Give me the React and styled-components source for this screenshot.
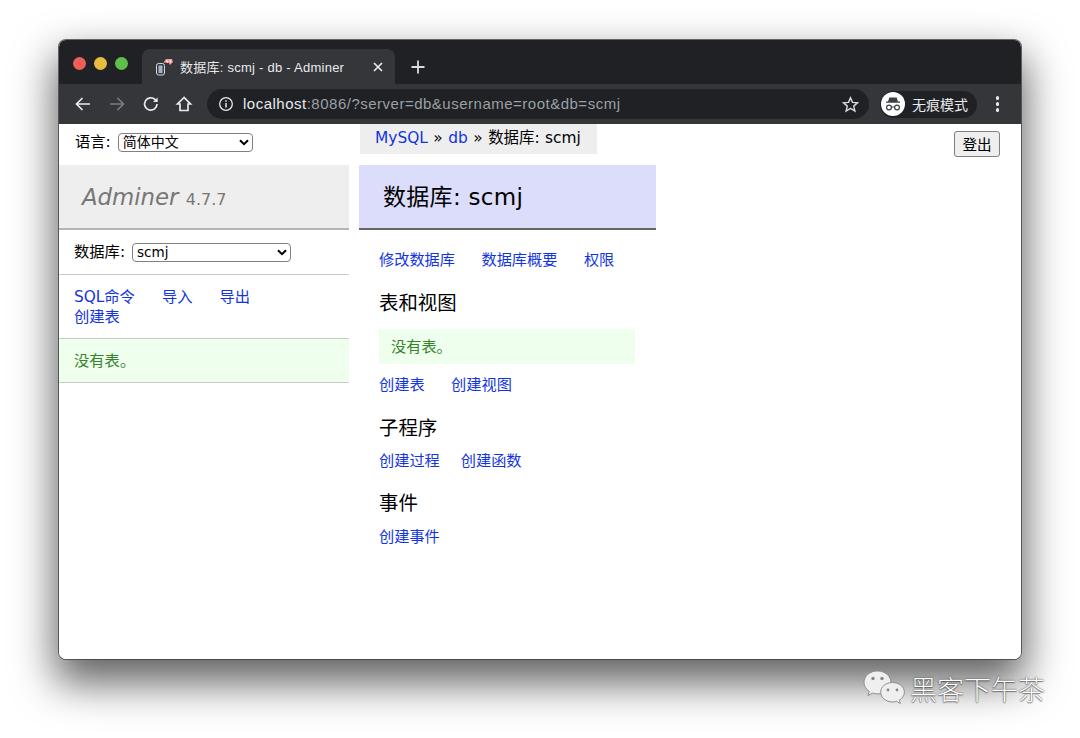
import React from "react";
import styled, { createGlobalStyle } from "styled-components";

const SANS = `"DejaVu Sans", "Noto Sans CJK SC", sans-serif`;
const UI = `"Liberation Sans", "Noto Sans CJK SC", sans-serif`;
const CHEVRON = `url("data:image/svg+xml,%3Csvg xmlns='http://www.w3.org/2000/svg' width='10' height='7'%3E%3Cpath d='M1 1.2l4 4 4-4' fill='none' stroke='%23000' stroke-width='2'/%3E%3C/svg%3E")`;
const BLUE = "#1234e2";
const GREEN = "#35842a";

const Global = createGlobalStyle`
  html, body { margin: 0; padding: 0; background: #fff; }
  body { width: 1080px; height: 738px; overflow: hidden; font-family: ${SANS}; }
  * { box-sizing: border-box; }
`;

const Page = styled.div`
  position: relative;
  width: 1080px;
  height: 738px;
  padding: 40px 59px 79px;
  background: #fff;
`;

const Win = styled.div`
  height: 619px;
  display: flex;
  flex-direction: column;
  border-radius: 7px;
  overflow: hidden;
  background: #fff;
  box-shadow: 0 0 0 1px rgba(60,60,60,.75), 0 20px 42px 4px rgba(0,0,0,.62);
`;

const TabBar = styled.div`
  height: 44px;
  flex: none;
  background: #202124;
  display: flex;
  align-items: flex-end;
  padding-left: 14px;
`;

const Lights = styled.div`
  display: flex;
  gap: 8px;
  align-self: flex-start;
  margin-top: 17px;
  width: 69px;
`;

const Light = styled.span`
  width: 13px;
  height: 13px;
  border-radius: 50%;
  background: ${p => p.$c};
`;

const Tab = styled.div`
  width: 253px;
  height: 35px;
  background: #35363a;
  border-radius: 8px 8px 0 0;
  display: flex;
  align-items: center;
  padding: 0 11px 0 13px;
  color: #e8eaed;
  font: 13px ${UI};
`;

const TabTitle = styled.span`
  flex: 1;
  margin-left: 7px;
  letter-spacing: .25px;
`;

const NewTab = styled.div`
  width: 46px;
  height: 35px;
  display: flex;
  align-items: center;
  justify-content: center;
  color: #dadce0;
`;

const ToolBar = styled.div`
  height: 40px;
  flex: none;
  background: #35363a;
  display: flex;
  align-items: center;
  padding: 0 0 0 15px;
  gap: 0;
`;

const NavIcon = styled.svg`
  flex: none;
  width: 18px;
  height: 18px;
  margin-right: ${p => p.$mr}px;
  fill: none;
  stroke: ${p => p.$c || "#e8eaed"};
  stroke-width: 1.7;
`;

const Omni = styled.div`
  width: 662px;
  height: 30px;
  flex: none;
  border-radius: 15px;
  background: #202124;
  display: flex;
  align-items: center;
  padding: 0 10px 0 11px;
  font: 15px ${UI};
  color: #9aa0a6;
  margin-right: 11px;
`;

const OmniText = styled.span`
  flex: 1;
  margin-left: 9px;
  margin-top: -1px;
  letter-spacing: .5px;
`;

const Host = styled.span`
  color: #e8eaed;
`;

const Incognito = styled.div`
  width: 97px;
  height: 27px;
  flex: none;
  border-radius: 14px;
  background: #202124;
  display: flex;
  align-items: center;
  padding-left: 1px;
  color: #e8eaed;
  font: 14px ${UI};
  gap: 7px;
`;

const Dots = styled.div`
  display: flex;
  flex-direction: column;
  gap: 2.6px;
  margin-left: 19px;
`;

const Dot = styled.span`
  width: 3.4px;
  height: 3.4px;
  border-radius: 50%;
  background: #e8eaed;
`;

const Content = styled.div`
  flex: 1;
  display: flex;
  font: 15.3px ${SANS};
  color: #000;
  background: #fff;
  position: relative;
`;

const Side = styled.div`
  width: 290px;
  flex: none;
`;

const LangRow = styled.div`
  height: 41px;
  display: flex;
  align-items: flex-start;
  padding: 8px 0 0 16px;
  gap: 7px;
  line-height: 20px;
`;

const Select = styled.select`
  appearance: none;
  -webkit-appearance: none;
  width: ${p => p.$w}px;
  height: 19px;
  margin: 1px 0 0;
  padding: 0 0 1px 4px;
  border: 1px solid #808080;
  border-radius: 4px;
  background: #fff ${CHEVRON} no-repeat right 3px center;
  font: ${p => p.$fs || 14}px ${SANS};
  color: #000;
`;

const Logo = styled.div`
  height: 65px;
  padding: 16px 0 0 23px;
  background: #eee;
  border-bottom: 2px solid #b4b4b4;
  color: #777;
  font: italic 22.8px/32px ${SANS};
`;

const Version = styled.span`
  font: normal 16px ${SANS};
`;

const DbRow = styled.div`
  height: 45px;
  padding: 12px 0 0 15px;
  display: flex;
  align-items: flex-start;
  gap: 7px;
  border-bottom: 1px solid #ccc;
  line-height: 20px;
`;

const SideLinks = styled.div`
  height: 63px;
  padding: 13px 0 0 15px;
  line-height: 19px;
`;

const Links = styled.div`
  display: flex;
  gap: ${p => p.$gap || 27}px;
  line-height: 19px;
  margin-top: ${p => p.$mt || 0}px;
  padding-left: ${p => p.$pl || 0}px;
`;

const Link = styled.a`
  color: ${BLUE};
  text-decoration: none;
`;

const SideNote = styled.div`
  height: 45px;
  padding: 12px 0 0 15px;
  background: #efe;
  color: ${GREEN};
  border-top: 1px solid #ccc;
  border-bottom: 1px solid #ccc;
  line-height: 20px;
`;

const Main = styled.div`
  margin-left: 10px;
  width: 297px;
  flex: none;
  font-size: 15.2px;
`;

const Crumb = styled.div`
  width: 237px;
  height: 30px;
  margin-left: 1px;
  background: #eee;
  padding: 4px 0 0 15px;
  line-height: 20px;
  font-size: 15.4px;
  word-spacing: .6px;
  white-space: nowrap;
`;

const Title = styled.h2`
  height: 65px;
  margin: 11px 0 0;
  padding: 15px 0 0 24px;
  background: #dcdcfb;
  border-bottom: 2px solid #666;
  font: 400 23px/34px ${SANS};
  letter-spacing: .3px;
`;

const Sub = styled.h3`
  margin: ${p => p.$mt}px 0 0 20px;
  font: 400 19.4px/26px ${SANS};
`;

const Note = styled.div`
  width: 256px;
  height: 35px;
  margin: 12px 0 0 20px;
  padding: 8px 0 0 12px;
  background: #efe;
  color: ${GREEN};
  line-height: 20px;
`;

const Logout = styled.button`
  position: absolute;
  top: 7px;
  right: 21px;
  width: 46px;
  height: 26px;
  padding: 0 0 2px;
  background: #efefef;
  border: 1px solid #808080;
  border-radius: 3px;
  font: 14.6px ${SANS};
  color: #000;
`;

const Mark = styled.div`
  position: absolute;
  left: 863px;
  top: 669px;
  display: flex;
  align-items: center;
  gap: 3px;
`;

const MarkText = styled.span`
  font: 300 27px/40px "Noto Sans CJK SC", sans-serif;
  color: #fff;
  text-shadow: 0 0 1.5px rgba(0,0,0,.85), 0 1px 1px rgba(0,0,0,.35);
`;

const Back = () => (
  <NavIcon $mr={16} viewBox="0 0 18 18"><path d="M16 9H2.5M8.5 3L2.5 9l6 6" /></NavIcon>
);
const Fwd = () => (
  <NavIcon $mr={16} $c="#7b7d81" viewBox="0 0 18 18"><path d="M2 9h13.5M9.5 3l6 6-6 6" /></NavIcon>
);
const Reload = () => (
  <NavIcon $mr={15} viewBox="0 0 18 18"><path d="M15 9a6.2 6.2 0 1 1-1.8-4.4L15.2 6.6" /><path d="M15.6 2.4v4.6H11" fill="#e8eaed" stroke="none" /></NavIcon>
);
const Home = () => (
  <NavIcon $mr={14} viewBox="0 0 18 18"><path d="M9 2.5L2.5 9H5v6.5h8V9h2.5z" /></NavIcon>
);

const Favicon = () => (
  <svg width="18" height="18" viewBox="0 0 18 18">
    <rect x="1.5" y="5.5" width="8" height="11.5" rx="2" fill="#3b3d42" stroke="#d5d8dc" strokeWidth="1" />
    <rect x="3.5" y="7.5" width="4" height="7.5" fill="#9fb6c8" />
    <path d="M8.5 4.5l2.5-3.5h6l1 3-3 3-1.2-2z" fill="#ee9a9a" />
    <path d="M11.5 2.5l1.2 2M15.3 2v2.5" stroke="#fff" strokeWidth="1.1" />
  </svg>
);

const Spy = () => (
  <svg width="24" height="24" viewBox="0 0 24 24">
    <circle cx="12" cy="12" r="12" fill="#fff" />
    <path d="M8.3 5.5h7.4l1.2 4H19v1.3H5V9.500h2.100z" fill="#3c4043" />
    <circle cx="8" cy="15.5" r="2.400" fill="none" stroke="#3c4043" strokeWidth="1.2" />
    <circle cx="16" cy="15.5" r="2.400" fill="none" stroke="#3c4043" strokeWidth="1.2" />
    <path d="M10.4 15h3.2" stroke="#3c4043" strokeWidth="1.2" />
  </svg>
);

const WeChat = () => (
  <svg width="44" height="38" viewBox="0 0 44 38">
    <g stroke="#8f8f8f" strokeWidth="1" fill="#efefef">
      <path d="M14.5 1C6.8 1 1 6 1 12.500c0 3.800 2 6.800 5.300 9l-1.400 4 4.700-2.400c1.700.5 3.300.8 4.900.8 7.500 0 13.500-5 13.500-11.400S22 1 14.500 1z" />
      <path d="M29.500 12.500c-6.600 0-11.800 4.300-11.800 9.700s5.200 9.700 11.800 9.700c1.400 0 2.700-.2 4-.6l3.900 2.300-1-3.500c3-1.800 5-4.600 5-7.900 0-5.400-5.300-9.700-11.900-9.700z" />
    </g>
    <circle cx="10" cy="8.500" r="1.700" fill="#888" />
    <circle cx="19" cy="8.500" r="1.700" fill="#888" />
    <circle cx="25" cy="20" r="1.400" fill="#888" />
    <circle cx="34" cy="20" r="1.400" fill="#888" />
  </svg>
);

export default function App() {
  return (
    <Page>
      <Global />
      <Win>
        <TabBar>
          <Lights>
            <Light $c="#ee5f57" />
            <Light $c="#e6bd3e" />
            <Light $c="#60bf48" />
          </Lights>
          <Tab>
            <Favicon />
            <TabTitle>数据库: scmj - db - Adminer</TabTitle>
            <svg width="12" height="12" viewBox="0 0 12 12"><path d="M2 2l8 8M10 2l-8 8" stroke="#e8eaed" strokeWidth="1.7" /></svg>
          </Tab>
          <NewTab>
            <svg width="14" height="14" viewBox="0 0 14 14"><path d="M7 0.5v13M0.5 7h13" stroke="#dadce0" strokeWidth="1.8" /></svg>
          </NewTab>
        </TabBar>
        <ToolBar>
          <Back />
          <Fwd />
          <Reload />
          <Home />
          <Omni>
            <svg width="16" height="16" viewBox="0 0 16 16" fill="none" stroke="#e8eaed" strokeWidth="1.3"><circle cx="8" cy="8" r="6.3" /><path d="M8 7v4.5M8 4.3v1.5" strokeWidth="1.5" /></svg>
            <OmniText><Host>localhost</Host>:8086/?server=db&amp;username=root&amp;db=scmj</OmniText>
            <svg width="17" height="17" viewBox="0 0 17 17" fill="none" stroke="#dadce0" strokeWidth="1.4"><path d="M8.5 1.8l2 4.600 5 .4-3.800 3.300 1.200 4.900-4.400-2.600-4.400 2.600 1.200-4.900L1.500 6.800l5-.4z" /></svg>
          </Omni>
          <Incognito>
            <Spy />
            无痕模式
          </Incognito>
          <Dots><Dot /><Dot /><Dot /></Dots>
        </ToolBar>
        <Content>
          <Side>
            <LangRow>
              语言:
              <Select $w={135} defaultValue="简体中文"><option>简体中文</option></Select>
            </LangRow>
            <Logo>Adminer <Version>4.7.7</Version></Logo>
            <DbRow>
              数据库:
              <Select $w={159} $fs={13.5} defaultValue="scmj"><option>scmj</option></Select>
            </DbRow>
            <SideLinks>
              <Links><Link>SQL命令</Link><Link>导入</Link><Link>导出</Link></Links>
              <Links $mt={1}><Link>创建表</Link></Links>
            </SideLinks>
            <SideNote>没有表。</SideNote>
          </Side>
          <Main>
            <Crumb><Link>MySQL</Link> » <Link>db</Link> » 数据库: scmj</Crumb>
            <Title>数据库: scmj</Title>
            <Links $pl={20} $mt={21} $gap={26.5}><Link>修改数据库</Link><Link>数据库概要</Link><Link>权限</Link></Links>
            <Sub $mt={21}>表和视图</Sub>
            <Note>没有表。</Note>
            <Links $pl={20} $mt={12} $gap={26.5}><Link>创建表</Link><Link>创建视图</Link></Links>
            <Sub $mt={21}>子程序</Sub>
            <Links $pl={20} $mt={10} $gap={21}><Link>创建过程</Link><Link>创建函数</Link></Links>
            <Sub $mt={20}>事件</Sub>
            <Links $pl={20} $mt={11}><Link>创建事件</Link></Links>
          </Main>
          <Logout>登出</Logout>
        </Content>
      </Win>
      <Mark>
        <WeChat />
        <MarkText>黑客下午茶</MarkText>
      </Mark>
    </Page>
  );
}
